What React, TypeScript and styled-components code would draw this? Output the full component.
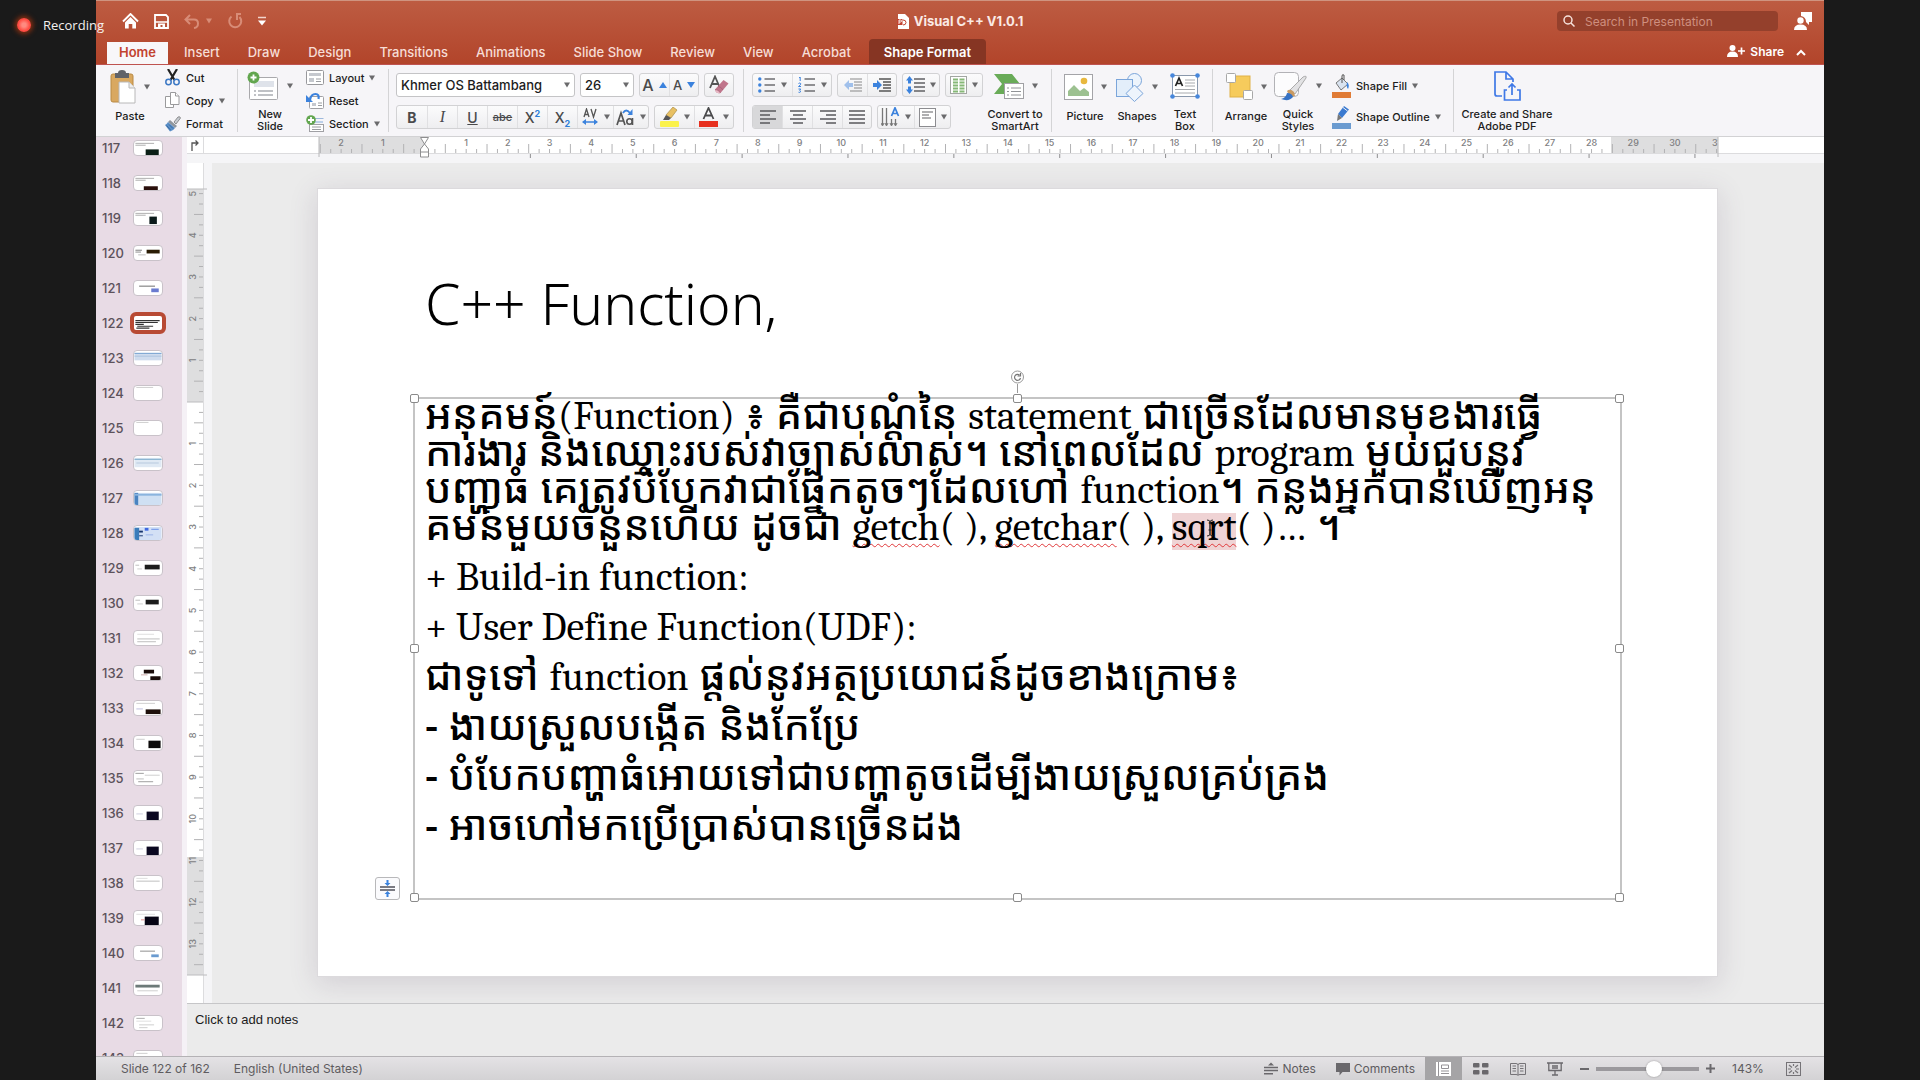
import React from "react";
import styled, { createGlobalStyle, css } from "styled-components";

const UI = `Inter, "Liberation Sans", sans-serif`;

const Global = createGlobalStyle`
  *, *::before, *::after { box-sizing: border-box; }
  body { margin: 0; background: #1a1a1a; font-family: ${UI}; }
  button, input, select, textarea { font: inherit; color: inherit; }
  button { border: 0; background: none; padding: 0; }
  svg { display: block; flex: none; }
`;

/* ---------- shell ---------- */
const Screen = styled.div`
  position: relative;
  display: flex;
  height: 100vh;
  padding: 0 96px;
  background: #1a1a1a;
`;
const AppWindow = styled.div`
  flex: 1;
  min-width: 0;
  display: flex;
  flex-direction: column;
  background: #f6f6f8;
`;
const RecordingBadge = styled.div`
  position: absolute;
  left: 15px;
  top: 16px;
  display: flex;
  align-items: center;
  gap: 10px;
  color: #f4f0ee;
  font: 13px/18px "Open Sans", "Noto Sans", sans-serif;
`;
const RecordDot = styled.span`
  width: 14px;
  height: 14px;
  margin: 2px;
  border-radius: 50%;
  background: radial-gradient(#ff8a80 0 20%, #ff4a40 60%);
  box-shadow: 0 0 5px 2px #8a3010;
`;

/* ---------- header ---------- */
const Header = styled.header`
  border-top: 1px solid #cf9480;
  background: linear-gradient(#bd5c42, #b2442a);
  color: #fbeae5;
`;
const TitleBar = styled.div`
  display: grid;
  grid-template-columns: 1fr auto 1fr;
  align-items: center;
  height: 38px;
  padding: 2px 12px 0;
`;
const QuickAccess = styled.div`
  display: flex;
  align-items: center;
  gap: 15px;
  margin-left: 14px;
`;
const IconButton = styled.button<{ $faded?: boolean }>`
  display: flex;
  align-items: center;
  gap: 6px;
  color: ${(p) => (p.$faded ? "#d88c77" : "#fff")};
`;
const DocTitle = styled.h1`
  display: flex;
  align-items: center;
  gap: 5px;
  margin: 0;
  font-size: 13px;
  font-weight: 700;
`;
const TitleTools = styled.div`
  display: flex;
  align-items: center;
  justify-content: flex-end;
  gap: 16px;
`;
const SearchBox = styled.label`
  display: flex;
  align-items: center;
  gap: 10px;
  width: 221px;
  height: 20px;
  padding: 0 6px;
  border-radius: 4px;
  background: #94402c;
  input {
    flex: 1;
    min-width: 0;
    border: 0;
    padding: 0;
    outline: 0;
    background: none;
    font-size: 12px;
  }
  input::placeholder { color: #cf8f7f; opacity: 1; }
`;
const TabRow = styled.nav`
  display: flex;
  align-items: flex-end;
  gap: 4px;
  height: 26px;
  padding: 0 14px 0 11px;
  border-bottom: 1px solid #bf5350;
`;
const Tab = styled.button<{ $kind?: "active" | "context" }>`
  height: 22px;
  padding: 0 12px 2px;
  font-size: 13px;
  font-weight: 500;
  line-height: 20px;
  white-space: nowrap;
  color: #f7ddd6;
  ${(p) =>
    p.$kind === "active" &&
    css`
      background: #f8f7f9;
      color: #c2432f;
      font-weight: 600;
    `}
  ${(p) =>
    p.$kind === "context" &&
    css`
      height: 25px;
      margin-left: 2px;
      padding: 0 15px;
      border-radius: 4px 4px 0 0;
      background: #863523;
      color: #fff;
      font-weight: 600;
    `}
`;
const ShareButton = styled.button`
  display: flex;
  align-items: center;
  gap: 5px;
  height: 22px;
  margin-left: auto;
  padding-bottom: 4px;
  font-size: 12px;
  font-weight: 600;
  color: #fff;
`;
const CollapseButton = styled.button`
  display: flex;
  align-items: center;
  height: 22px;
  margin-left: 8px;
  padding: 0 4px 2px 0;
  color: #fff;
`;

/* ---------- ribbon ---------- */
const Ribbon = styled.div`
  display: flex;
  align-items: center;
  height: 72px;
  border-bottom: 1px solid #d2d2d4;
  background: #f6f5f8;
  color: #1c1c1c;
  font-size: 11px;
  font-weight: 500;
`;
const Group = styled.div<{ $w?: number; $left?: number }>`
  display: flex;
  flex: none;
  width: ${(p) => (p.$w ? `${p.$w}px` : "auto")};
  height: 63px;
  align-items: stretch;
  padding-left: ${(p) => p.$left ?? 8}px;
  & + & { border-left: 1px solid #d4d4d6; }
`;
const BigButton = styled.button<{ $w: number }>`
  display: flex;
  flex-direction: column;
  align-items: center;
  justify-content: flex-start;
  width: ${(p) => p.$w}px;
  line-height: 12px;
  white-space: pre;
`;
const BigIcon = styled.span`
  display: flex;
  align-items: center;
  gap: 8px;
  height: 34px;
  margin: 1px 0 6px;
`;
const Stack = styled.div<{ $tall?: boolean }>`
  display: flex;
  flex-direction: column;
  justify-content: center;
  gap: ${(p) => (p.$tall ? 8 : 0)}px;
  margin-left: 9px;
`;
const SmallButton = styled.button<{ $icon?: number }>`
  display: grid;
  grid-template-columns: ${(p) => p.$icon ?? 18}px auto auto;
  justify-content: start;
  align-items: center;
  column-gap: 5px;
  flex: none;
  height: 23px;
  white-space: nowrap;
`;
const Rows = styled.div`
  display: flex;
  flex-direction: column;
  gap: 8px;
  padding-top: 4px;
`;
const Row = styled.div`
  display: flex;
  gap: 5px;
`;
const Cluster = styled.div`
  display: flex;
  height: 24px;
  border: 1px solid #d2d2d4;
  border-radius: 3px;
  background: linear-gradient(#fbfbfc, #eeeef0);
  overflow: hidden;
`;
const Cell = styled.button<{ $w?: number; $on?: boolean }>`
  display: flex;
  align-items: center;
  justify-content: center;
  gap: 5px;
  width: ${(p) => p.$w ?? 30}px;
  color: #4a4a4c;
  font-size: 14px;
  background: ${(p) => (p.$on ? "#d8d8da" : "none")};
  & + & { border-left: 1px solid #e0e0e2; }
`;
const Combo = styled.label<{ $w: number }>`
  position: relative;
  display: flex;
  align-items: center;
  width: ${(p) => p.$w}px;
  height: 24px;
  border: 1px solid #c4c4c6;
  border-radius: 3px;
  background: #fff;
  select {
    flex: 1;
    height: 100%;
    padding: 0 4px;
    border: 0;
    outline: 0;
    background: none;
    appearance: none;
    font-size: 13px;
  }
  svg {
    position: absolute;
    right: 4px;
    pointer-events: none;
  }
`;
const Glyph = styled.span<{ $bold?: boolean; $italic?: boolean; $line?: string; $size?: number }>`
  font-size: ${(p) => p.$size ?? 14}px;
  font-weight: ${(p) => (p.$bold ? 700 : 500)};
  font-style: ${(p) => (p.$italic ? "italic" : "normal")};
  font-family: ${(p) => (p.$italic ? `"Liberation Serif", serif` : "inherit")};
  text-decoration: ${(p) => p.$line ?? "none"};
  sup, sub { color: #2f7fd8; font-size: 9px; line-height: 0; font-weight: 700; }
`;

/* ---------- workspace ---------- */
const Workspace = styled.main`
  flex: 1;
  min-height: 0;
  display: flex;
`;
const Sidebar = styled.ol`
  width: 86px;
  margin: 0;
  padding: 0;
  overflow: hidden;
  list-style: none;
  background: #e8dbe5;
`;
const ThumbItem = styled.li`
  display: flex;
  align-items: center;
  height: 35px;
  padding-left: 6px;
  color: #5c525b;
  font-size: 13px;
  font-weight: 500;
  &:first-child { margin-top: -7px; }
`;
const ThumbNumber = styled.span`
  width: 28px;
`;
const ThumbFrame = styled.button<{ $on?: boolean }>`
  display: flex;
  border-radius: 4px;
  overflow: hidden;
  background: #fff;
  border: 1px solid #c9c2c9;
  margin: 0 3px;
  ${(p) =>
    p.$on &&
    css`
      margin: 0;
      border: 4px solid #b84a34;
      border-radius: 6px;
    `}
`;
const Editor = styled.section`
  flex: 1;
  min-width: 0;
  display: flex;
  flex-direction: column;
  border-left: 5px solid #f5f1f6;
`;
const RulerRow = styled.div`
  display: flex;
  height: 26px;
  background: #f5f5f7;
`;
const RulerCorner = styled.button`
  display: flex;
  justify-content: center;
  align-items: center;
  width: 17px;
  height: 17px;
  border: solid #dcdcde;
  border-width: 0 1px 1px 0;
  background: #fff;
  color: #555;
`;
const HRuler = styled.div`
  flex: 1;
  min-width: 0;
  overflow: hidden;
  svg { width: 100%; height: 26px; }
`;
const Stage = styled.div`
  flex: 1;
  min-height: 0;
  display: flex;
`;
const VRuler = styled.div`
  width: 25px;
  overflow: hidden;
  background: #f5f5f7;
  svg { width: 25px; height: 100%; }
`;
const Canvas = styled.div`
  flex: 1;
  min-width: 0;
  display: flex;
  padding: 26px 107px 27px 106px;
  background: #ebebeb;
`;
const Slide = styled.article`
  flex: 1;
  min-width: 0;
  display: flex;
  flex-direction: column;
  padding: 0 95px 76px;
  background: #fff;
  color: #000;
  box-shadow: 0 0 0 1px #dcdadd, 0 6px 26px 2px rgba(90, 70, 100, 0.16);
`;
const SlideTitle = styled.h2`
  height: 208px;
  margin: 0;
  padding: 76px 0 0 12px;
  font: 300 57px/76px "Noto Sans", "Open Sans", sans-serif;
`;
const TextFrame = styled.div`
  position: relative;
  flex: 1;
  border: 2px solid #c4c4c4;
  padding: 0 10px;
`;
const Body = styled.div`
  margin-top: -4px;
  font: 500 41px/37px "Noto Sans Khmer", "Noto Sans", sans-serif;
  white-space: nowrap;
`;
const Para = styled.p`
  margin: 0 0 13px;
`;
const Line = styled.span`
  display: block;
`;
const Latin = styled.span`
  font: 400 40px/0 Cambria, Caladea, "Liberation Serif", serif;
`;
const Misspelt = styled.span<{ $hit?: boolean }>`
  position: relative;
  text-decoration: underline wavy #e0383a 1px;
  text-underline-offset: 3px;
  text-decoration-skip-ink: none;
  ${(p) =>
    p.$hit &&
    css`
      background: linear-gradient(#efd3d4, #efd3d4) center bottom / 100% 37px no-repeat;
    `}
`;
const Pointer = styled.svg`
  position: absolute;
  left: 50%;
  top: 50%;
  margin: -8px 0 0 2px;
`;
const Handle = styled.i<{ $x: number; $y: number }>`
  position: absolute;
  left: ${(p) => p.$x}%;
  top: ${(p) => p.$y}%;
  width: 9px;
  height: 9px;
  margin: -5px;
  border: 1px solid #8a8a8a;
  border-radius: 2px;
  background: #fff;
`;
const RotateHandle = styled.span`
  position: absolute;
  left: 50%;
  top: -30px;
  margin-left: -8px;
`;
const AutofitButton = styled.button`
  position: absolute;
  left: -40px;
  bottom: -2px;
  display: flex;
  align-items: center;
  justify-content: center;
  width: 25px;
  height: 23px;
  border: 1px solid #b8b8ba;
  border-radius: 3px;
  background: #fbfbfd;
`;
const NotesPane = styled.label`
  display: block;
  height: 53px;
  border-top: 1px solid #c6c6c8;
  background: #ebebeb;
  textarea {
    display: block;
    width: 100%;
    height: 100%;
    padding: 8px;
    border: 0;
    outline: 0;
    resize: none;
    background: none;
    font: 13px/16px "Liberation Sans", Arial, sans-serif;
  }
  textarea::placeholder { color: #1c1c1c; opacity: 1; }
`;

/* ---------- status bar ---------- */
const StatusBar = styled.footer`
  display: flex;
  align-items: center;
  height: 24px;
  padding: 0 23px 0 25px;
  border-top: 1px solid #b4b2b5;
  background: linear-gradient(#e4e2e5, #d3d2d4);
  color: #5e5c60;
  font-size: 12px;
`;
const StatusText = styled.span`
  margin-right: 24px;
`;
const StatusButton = styled.button`
  display: flex;
  align-items: center;
  gap: 4px;
  & + & { margin: 0 10px 0 20px; }
`;
const StatusTools = styled.div`
  display: flex;
  align-items: center;
  align-self: stretch;
  margin-left: auto;
`;
const ViewButton = styled.button<{ $on?: boolean }>`
  display: flex;
  align-items: center;
  justify-content: center;
  align-self: stretch;
  width: 37px;
  background: ${(p) => (p.$on ? "#a5a4a6" : "none")};
`;
const ZoomSlider = styled.input`
  width: 103px;
  height: 16px;
  margin: 0 7px;
  appearance: none;
  background: linear-gradient(#9b999d, #9b999d) center / 100% 4px no-repeat;
  &::-webkit-slider-thumb {
    appearance: none;
    width: 16px;
    height: 16px;
    border-radius: 50%;
    background: #fff;
    box-shadow: 0 0 2px rgba(0, 0, 0, 0.35);
  }
`;
const ZoomValue = styled.output`
  width: 34px;
  margin: 0 20px 0 17px;
`;

/* ---------- icons ---------- */
const Caret = ({ light }: { light?: boolean }) => (
  <svg width="6" height="6" viewBox="0 0 6 6">
    <path d="M0 .5h6L3 5.5z" fill={light ? "currentColor" : "#6a6a6c"} />
  </svg>
);
const PasteIcon = () => (
  <svg width="26" height="34" viewBox="0 0 26 34">
    <rect x="1" y="4" width="22" height="28" rx="2" fill="#d9a860" stroke="#b98a45" />
    <path d="M5 3h3q0-3 4-3t4 3h3v5H5z" fill="#606268" />
    <path d="M9 12h10l6 6v15H9z" fill="#fff" stroke="#b8b8b8" />
    <path d="M19 12v6h6" fill="#eee" stroke="#b8b8b8" />
  </svg>
);
const CutIcon = () => (
  <svg width="15" height="17" viewBox="0 0 15 17" fill="none">
    <path d="M3 0l6.500 11M12 0L5.500 11" stroke="#222" strokeWidth="2.200" />
    <circle cx="3.500" cy="13" r="2.700" stroke="#3c78c4" strokeWidth="1.500" />
    <circle cx="11.500" cy="13" r="2.700" stroke="#3c78c4" strokeWidth="1.500" />
  </svg>
);
const CopyIcon = () => (
  <svg width="15" height="17" viewBox="0 0 15 17" fill="#fff" stroke="#9a9a9c">
    <path d="M.5 4.500h5l3 3v8h-8z" />
    <path d="M5.500.5h5l3.500 3.500v8.500H5.500z" />
    <path d="M10.500.5v3.500H14" />
  </svg>
);
const FormatIcon = () => (
  <svg width="16" height="16" viewBox="0 0 16 16">
    <path d="M9 6l4-5q2-1 2.500 1L11 8z" fill="#c8ccd2" stroke="#777" strokeWidth=".8" />
    <path d="M5 4l7 6-2 2-7-6z" fill="#8f969e" />
    <path d="M3 6l7 6q-2 3-5 3.500L0 9q2-1 3-3z" fill="#5b8fc7" />
    <path d="M1.500 9.500l4 4.500M4 8.500l4 4" stroke="#2f5f98" strokeWidth=".8" />
  </svg>
);
const PlusBadge = ({ x = 6, y = 6, r = 5.5 }) => (
  <g>
    <circle cx={x} cy={y} r={r} fill="#62a64f" />
    <path d={`M${x - 3} ${y}h6M${x} ${y - 3}v6`} stroke="#fff" strokeWidth="1.800" />
  </g>
);
const NewSlideIcon = () => (
  <svg width="32" height="30" viewBox="0 0 32 30">
    <rect x="2.500" y="6.500" width="28" height="22" rx="1" fill="#fff" stroke="#a9a9ac" />
    <rect x="7" y="10" width="20" height="6" fill="#dfe3ea" />
    <path d="M7 20h2M11 20h15M7 24h2M11 24h15" stroke="#aaadb2" strokeWidth="1.500" />
    <PlusBadge x={6.500} y={6.500} r={6} />
  </svg>
);
const LayoutIcon = () => (
  <svg width="18" height="15" viewBox="0 0 18 15">
    <rect x=".5" y=".5" width="17" height="14" rx="1" fill="#fff" stroke="#98989c" />
    <rect x="3" y="3" width="12" height="3" fill="#c5c8ce" />
    <rect x="3" y="8" width="5" height="4" fill="#c5c8ce" />
    <path d="M10 9h5M10 11.500h5" stroke="#9a9ca0" />
  </svg>
);
const ResetIcon = () => (
  <svg width="18" height="17" viewBox="0 0 18 17">
    <rect x="3.500" y="4.500" width="14" height="12" rx="1" fill="#fff" stroke="#a0a0a4" />
    <rect x="6" y="11" width="4" height="3" fill="#c5c8ce" />
    <path d="M12 11h4M12 13.500h4" stroke="#9a9ca0" />
    <path d="M4 8Q5 2 9.500 2q4 0 3 5" fill="none" stroke="#3b82dd" strokeWidth="2.200" />
    <path d="M0 3v7h7z" fill="#3b82dd" />
  </svg>
);
const SectionIcon = () => (
  <svg width="18" height="17" viewBox="0 0 18 17">
    <path d="M8 3.500h9.500" stroke="#9db8dc" />
    <rect x="3.500" y="9.500" width="14" height="7" fill="#fff" stroke="#a0a0a4" />
    <rect x="8" y="6" width="9" height="2" fill="#bcd0ea" />
    <path d="M6 12h9M6 14.500h9" stroke="#9a9ca0" />
    <PlusBadge x={5} y={5} r={4.800} />
  </svg>
);
const EraserIcon = () => (
  <svg width="20" height="20" viewBox="0 0 20 20">
    <path d="M1 13L6 1.500 11 13M3 9h6" fill="none" stroke="#555" strokeWidth="1.800" />
    <path d="M6 14.500L14.500 5l5 3.500-8 9.500q-4 1.500-5.500-3.500z" fill="#c0758b" />
    <path d="M6 14.500q3-.5 5.500 3.500-4 1.500-5.500-3.500z" fill="#e8b9c5" />
    <path d="M6 14.500q3-.5 5.500 3.500M9 11.500q3 0 5 3.500" fill="none" stroke="#a05a70" strokeWidth=".7" />
  </svg>
);
const SizeIcon = ({ up }: { up?: boolean }) => (
  <svg width="8" height="6" viewBox="0 0 8 6">
    <path d={up ? "M0 6h8L4 0z" : "M0 0h8L4 6z"} fill="#3b82dd" />
  </svg>
);
const SpacingIcon = () => (
  <svg width="17" height="18" viewBox="0 0 17 18">
    <path d="M2 9L4.500 1 7 9M3 6.500h3M9 1l2.500 8L14 1" fill="none" stroke="#555" strokeWidth="1.300" />
    <path d="M1 14h14" stroke="#3b82dd" strokeWidth="1.500" />
    <path d="M4 11v6L0 14zM12 11v6l4-3z" fill="#3b82dd" />
  </svg>
);
const CaseIcon = () => (
  <svg width="19" height="18" viewBox="0 0 19 18" fill="none">
    <path d="M1 17L5 5l4 12M2.500 13h5" stroke="#555" strokeWidth="1.700" />
    <circle cx="13.500" cy="13.500" r="2.700" stroke="#555" strokeWidth="1.600" />
    <path d="M16.500 10v7" stroke="#555" strokeWidth="1.600" />
    <path d="M7 5q3-5 7 0" stroke="#3b82dd" strokeWidth="1.800" />
    <path d="M16.500 1v6h-5z" fill="#3b82dd" />
  </svg>
);
const HighlightIcon = () => (
  <svg width="19" height="20" viewBox="0 0 19 20">
    <rect y="14" width="19" height="6" rx="1" fill="#fbf24b" />
    <path d="M6 8l7-8 4 3-6 8z" fill="#e8c063" stroke="#a98c48" strokeWidth=".7" />
    <path d="M6 8l5 3-2 2H3z" fill="#555" />
  </svg>
);
const FontColorIcon = () => (
  <svg width="19" height="20" viewBox="0 0 19 20">
    <path d="M4.500 12L9.500 1l5 11M6 8.500h7" fill="none" stroke="#4a4a4c" strokeWidth="1.800" />
    <rect y="14" width="19" height="6" fill="#e7301f" />
  </svg>
);
const digits = ["M1 1l1.200-1v4", "M.5 6.500q1.500-1 2.200 0T.5 9.500h2.500", "M.5 12h2.200l-1 1.500q1.500.5.5 1.700-.7.500-1.700 0"];
const BulletsIcon = ({ numbered }: { numbered?: boolean }) => (
  <svg width="18" height="16" viewBox="0 0 18 16">
    {[2, 8, 14].map((y, i) =>
      numbered ? (
        <path key={y} d={digits[i]} stroke="#3b82dd" fill="none" />
      ) : (
        <circle key={y} cx="1.800" cy={y} r="1.700" fill="#3b82dd" />
      )
    )}
    <path d="M6.500 2H17M6.500 8H17M6.500 14H17" stroke="#6e6e72" strokeWidth="1.600" />
  </svg>
);
const IndentIcon = ({ right }: { right?: boolean }) => (
  <svg width="18" height="14" viewBox="0 0 18 14" opacity={right ? 1 : 0.45}>
    <path d="M6 1h12M10 4h8M10 7h8M10 10h8M6 13h12" stroke="#555" strokeWidth="1.400" />
    <path d={right ? "M9 7L4 2v3H0v4h4v3z" : "M0 7l5-5v3h4v4H5v3z"} fill="#3b82dd" />
  </svg>
);
const LineSpacingIcon = () => (
  <svg width="19" height="18" viewBox="0 0 19 18">
    <path d="M8 3h11M8 7h11M8 11h11M8 15h11" stroke="#606064" strokeWidth="1.500" />
    <path d="M3.500 0L7 4.500H5v3H2v-3H0zM3.500 18L7 13.500H5v-3H2v3H0z" fill="#3b82dd" />
  </svg>
);
const ColumnsIcon = () => (
  <svg width="17" height="18" viewBox="0 0 17 18">
    <rect x=".5" y=".5" width="16" height="17" fill="#fff" stroke="#a2a6a2" />
    <path d="M3 3.500h5M3 6.500h5M3 9.500h5M3 12.500h5M3 15.500h5M9.500 3.500h5M9.500 6.500h5M9.500 9.500h5M9.500 12.500h5M9.500 15.500h5" stroke="#86b877" strokeWidth="1.800" />
  </svg>
);
const alignPaths = {
  left: "M0 1h16M0 5h10M0 9h16M0 13h10",
  center: "M0 1h16M3 5h10M0 9h16M3 13h10",
  right: "M0 1h16M6 5h10M0 9h16M6 13h10",
  justify: "M0 1h16M0 5h16M0 9h16M0 13h16",
};
const AlignIcon = ({ kind }: { kind: keyof typeof alignPaths }) => (
  <svg width="16" height="14" viewBox="0 0 16 14" stroke="#58585c" strokeWidth="1.500">
    <path d={alignPaths[kind]} />
  </svg>
);
const DirectionIcon = () => (
  <svg width="19" height="20" viewBox="0 0 19 20" fill="none">
    <path d="M1.500 1v17M5.500 1v17M10.500 12v6M14.500 12v6" stroke="#777" strokeWidth="1.300" />
    <path d="M0 16l1.500 3L3 16M4 16l1.500 3L7 16M9 16l1.500 3 1.500-3M13 16l1.500 3 1.500-3" stroke="#777" />
    <path d="M10.500 9L14 .8 17.500 9M11.800 6.500h4.400" stroke="#3b82dd" strokeWidth="1.700" />
  </svg>
);
const TextAlignIcon = () => (
  <svg width="17" height="19" viewBox="0 0 17 19">
    <rect x=".5" y=".5" width="16" height="18" fill="#fff" stroke="#8c8c90" />
    <path d="M3 4h11M3 7h7M3 10h9" stroke="#606064" strokeWidth="1.200" />
  </svg>
);
const SmartArtIcon = () => (
  <svg width="31" height="28" viewBox="0 0 31 28">
    <path d="M1 2h18l8 10-8 10H1l8-10z" fill="#69ab58" />
    <rect x="11.500" y="11.500" width="19" height="15" fill="#fff" stroke="#a0a0a4" />
    <path d="M14 16h2M18 16h10M14 19.500h2M18 19.500h10M14 23h2M18 23h10" stroke="#909296" />
  </svg>
);
const PictureIcon = () => (
  <svg width="29" height="26" viewBox="0 0 29 26">
    <rect x=".5" y=".5" width="28" height="25" fill="#fff" stroke="#a4a4a8" />
    <path d="M4 22v-5l6-6 6 6 4-3 5 4v4z" fill="#9cc190" />
    <circle cx="20" cy="7" r="3.300" fill="#e8b83e" />
  </svg>
);
const ShapesIcon = () => (
  <svg width="28" height="29" viewBox="0 0 28 29" fill="#edf4fc" stroke="#7ba5da">
    <circle cx="18.500" cy="7.500" r="7" />
    <rect x=".5" y="6.500" width="16" height="17" fill="#e3eefa" />
    <path d="M18.500 12l8.500 8.500-8.500 8-8.500-8z" />
  </svg>
);
const TextBoxIcon = () => (
  <svg width="30" height="26" viewBox="0 0 30 26">
    <rect x="2.500" y="2.500" width="25" height="21" fill="#fff" stroke="#8a98ac" />
    <path d="M5.500 13L9 5l3.500 8M6.800 10.500h4.400" fill="none" stroke="#222" strokeWidth="1.700" />
    <path d="M15 7h10M15 10h10M15 13h10M5 16.500h20M5 20h20" stroke="#a8aaae" />
    {[[2.500, 2.500], [27.500, 2.500], [2.500, 23.500], [27.500, 23.500]].map(([x, y]) => (
      <circle key={`${x}${y}`} cx={x} cy={y} r="2.300" fill="#4787dc" />
    ))}
  </svg>
);
const ArrangeIcon = () => (
  <svg width="27" height="28" viewBox="0 0 27 28">
    <rect x="4" y="3" width="20" height="21" fill="#f6cb5c" stroke="#dfb146" />
    <rect x=".5" y=".5" width="9" height="9" rx="1" fill="#fff" stroke="#a8a8a8" />
    <rect x="17.500" y="17.500" width="9" height="9" rx="1" fill="#fff" stroke="#a8a8a8" />
  </svg>
);
const QuickStylesIcon = () => (
  <svg width="34" height="30" viewBox="0 0 34 30">
    <rect x=".5" y="1.500" width="24" height="24" rx="4" fill="#fcfcfd" stroke="#b2b2b6" />
    <path d="M16 19L29 6q4-2 3 1L21 23z" fill="#e2e2e4" stroke="#999" strokeWidth=".8" />
    <path d="M13 20q3-3 7 1l1 4-5 1z" fill="#c99a62" />
    <path d="M7 28q5-1 6-6 5 0 6 4-4 5-12 2z" fill="#3672c4" />
  </svg>
);
const FillIcon = () => (
  <svg width="19" height="24" viewBox="0 0 19 24">
    <rect y="18" width="19" height="6" fill="#e07b36" />
    <path d="M4 9l6-5 6 6-7 6z" fill="#d9e3f0" stroke="#777" />
    <path d="M10 9V2q0-2 2-1v5" fill="none" stroke="#555" />
    <path d="M15 8q3 3 1 7-2-2-1-7z" fill="#3b82dd" />
  </svg>
);
const OutlineIcon = () => (
  <svg width="19" height="24" viewBox="0 0 19 24">
    <rect y="18" width="19" height="6" fill="#6b9bd0" />
    <path d="M6 9l6-8 5 3.500-7 8.500z" fill="#3b7ad0" />
    <path d="M11 2.500l4.500 3.500" stroke="#f6f5f8" />
    <path d="M6 9l4 4-5 3z" fill="#777" />
  </svg>
);
const PdfIcon = () => (
  <svg width="27" height="30" viewBox="0 0 27 30" fill="none" stroke="#3f78e6" strokeWidth="1.700">
    <path d="M8 25H3q-2 0-2-2V1h11l7 7v3M12 1v7h7" />
    <path d="M13 19h-2.500v10H26V19h-3M18 24V13M14.500 16.500L18 13l3.500 3.500" />
  </svg>
);
const HomeIcon = () => (
  <svg width="17" height="16" viewBox="0 0 17 16">
    <path d="M1 8.500L8.500 1 16 8.500" fill="none" stroke="#fff" strokeWidth="1.900" />
    <path d="M3 9.500L8.500 4 14 9.500V15.500h-3.700v-4.500H6.700v4.500H3z" fill="#fff" />
  </svg>
);
const SaveIcon = () => (
  <svg width="15" height="15" viewBox="0 0 15 15">
    <path d="M1 1h11l2 2v11H1z" fill="none" stroke="#fff" strokeWidth="1.800" />
    <path d="M1 8h13" stroke="#fff" strokeWidth="1.500" />
    <path d="M4 9.500h7V14H8.500v-3h-2v3H4z" fill="#fff" />
  </svg>
);
const UndoIcon = () => (
  <svg width="16" height="15" viewBox="0 0 16 15" fill="none" stroke="currentColor" strokeWidth="2">
    <path d="M6 1L1.500 5.500 6 10M2 5.500h8q4 0 4 4t-4 4.500" />
  </svg>
);
const RedoIcon = () => (
  <svg width="16" height="16" viewBox="0 0 16 16" fill="none" stroke="currentColor" strokeWidth="2">
    <path d="M4.500 3.500A6 6 0 1 0 12.500 4M9 1h5M10 1v6" />
  </svg>
);
const CustomizeIcon = () => (
  <svg width="8" height="10" viewBox="0 0 8 10">
    <path d="M0 1.500h8" stroke="#f3d5cc" strokeWidth="1.500" />
    <path d="M0 4.500h8L4 9.500z" fill="#fff" />
  </svg>
);
const DocIcon = () => (
  <svg width="12" height="15" viewBox="0 0 12 15">
    <path d="M1 0h7l4 4v11H1z" fill="#fff" />
    <path d="M0 5h5.500v6H0z" fill="#c2432f" />
    <path d="M2 10V6h1.500q1 0 1 1t-1 1H2" stroke="#fff" fill="none" strokeWidth=".9" />
    <path d="M6 6q3 0 3 2.500T6 11" stroke="#c2432f" fill="none" />
  </svg>
);
const SearchIcon = () => (
  <svg width="12" height="12" viewBox="0 0 12 12" fill="none" stroke="#f6e2dc" strokeWidth="1.500">
    <circle cx="5" cy="5" r="4" />
    <path d="M8 8l3.500 3.500" />
  </svg>
);
const PresenceIcon = () => (
  <svg width="18" height="18" viewBox="0 0 18 18" fill="#fff">
    <path d="M7 0h11v10h-3v3l-3-3q0-5-5-6z" />
    <circle cx="6.500" cy="8.500" r="3.200" />
    <path d="M0 18q0-5.500 6.500-5.500T13 18z" />
  </svg>
);
const ShareIcon = () => (
  <svg width="18" height="12" viewBox="0 0 18 12" fill="#fff">
    <circle cx="5.500" cy="3" r="3" />
    <path d="M0 12q0-5.500 5.500-5.500T11 12z" />
    <path d="M14.500 2.500v7M11 6h7" stroke="#fff" strokeWidth="1.700" />
  </svg>
);
const NotesIcon = () => (
  <svg width="14" height="13" viewBox="0 0 14 13" stroke="#6a686c" strokeWidth="1.500">
    <path d="M0 5.500h14M0 8.500h14M0 11.700h9" />
    <path d="M4 3.500L7 .5l3 3z" fill="#6a686c" stroke="none" />
  </svg>
);
const CommentIcon = () => (
  <svg width="14" height="14" viewBox="0 0 14 14">
    <path d="M0 1h14v9H6.500L3.500 13.500V10H0z" fill="#6a686c" />
  </svg>
);
const NormalViewIcon = () => (
  <svg width="15" height="14" viewBox="0 0 15 14">
    <rect width="15" height="14" fill="#fff" />
    <path d="M2.500 0v14M5.500 3h7v3.500h-7zM5 9h8M5 11.500h8" stroke="#949296" fill="none" />
  </svg>
);
const SorterIcon = () => (
  <svg width="16" height="12" viewBox="0 0 16 12" fill="#6a686c">
    <rect width="6.500" height="4.500" rx="1" />
    <rect x="9" width="6.500" height="4.500" rx="1" />
    <rect y="7" width="6.500" height="4.500" rx="1" />
    <rect x="9" y="7" width="6.500" height="4.500" rx="1" />
  </svg>
);
const BookIcon = () => (
  <svg width="16" height="14" viewBox="0 0 16 14" fill="none" stroke="#757377">
    <path d="M.5 1.500H6q2 0 2 1.500 0-1.500 2-1.500h5.500v11H10q-2 0-2 1 0-1-2-1H.5zM8 3v10M2.500 4h3.500M2.500 6.500h3.500M2.500 9h3.500M10 4h3.500M10 6.500h3.500M10 9h3.500" />
  </svg>
);
const PresentIcon = () => (
  <svg width="16" height="14" viewBox="0 0 16 14" fill="none" stroke="#6a686c" strokeWidth="1.300">
    <path d="M0 1h16M1.800 1v7.500h12.400V1M5 4h6M5 6h6M8 8.500V13M5 13h6" />
  </svg>
);
const FitIcon = () => (
  <svg width="15" height="14" viewBox="0 0 15 14" fill="none" stroke="#757377">
    <rect x=".5" y=".5" width="14" height="13" />
    <path d="M3 3l3 2.500M12 3L9 5.500M3 11l3-2.500M12 11L9 8.500M7.500 2v2M7.500 10v2M2 7h3M10 7h3" strokeWidth="1.200" />
  </svg>
);
const AutofitIcon = () => (
  <svg width="15" height="17" viewBox="0 0 15 17">
    <path d="M0 7h15M0 10h15" stroke="#50505a" strokeWidth="1.300" />
    <path d="M7.500 6L4.500 3H6.500V0h2v3h2zM7.500 11l-3 3h2v3h2v-3h2z" fill="#3b82dd" />
  </svg>
);

/* ---------- rulers ---------- */
const CM = 41.68;
const ink = "#808082";

function HorizontalRuler() {
  const zero = 220.5;
  const ticks = [];
  for (let q = -10; q < 125; q++) {
    const x = zero + (q * CM) / 4;
    if (q === 0 || x > 1514) continue;
    ticks.push(<path key={q} d={`M${x} ${Math.abs(q % 4) === 2 ? 7 : 12}V16`} stroke="#b2b2b4" />);
  }
  return (
    <svg role="img" aria-label="Horizontal ruler">
      <rect width="100%" height="16" fill="#fff" />
      <rect x="115" width="105" height="16" fill="#dededf" />
      <rect x="1407" width="107" height="16" fill="#dededf" />
      <path d="M0 16.500H1700" stroke="#dcdcde" />
      {ticks}
      {Array.from({ length: 34 }, (_, i) => i - 2)
        .filter((n) => n !== 0)
        .map((n) => (
          <text key={n} x={zero + n * CM} y="9" fontSize="9" fontWeight="500" textAnchor="middle" fill={ink}>
            {Math.abs(n)}
          </text>
        ))}
      {Array.from({ length: 12 }, (_, i) => (
        <path key={i} d={`M${zero + (i + 1) * 105.87} 17v4`} stroke="#8e8e90" />
      ))}
      <path d="M1514 0H1700V16H1514z" fill="#fff" />
      <path d="M115 0v20M1514 0v20" stroke="#b8b8ba" />
      <path d="M216.500.5h8l-4 6.500 4 5v8h-8v-8l4-5zM216.500 15h8" fill="#fff" stroke="#8e8e90" />
    </svg>
  );
}

function VerticalRuler() {
  const zero = 239;
  const ticks = [];
  for (let q = -20; q < 55; q++) {
    const y = zero + (q * CM) / 4;
    if (q === 0 || y < 27 || y > 811) continue;
    ticks.push(<path key={q} d={`M${Math.abs(q % 4) === 2 ? 7 : 12} ${y}H16`} stroke="#b2b2b4" />);
  }
  return (
    <svg role="img" aria-label="Vertical ruler">
      <rect width="16" height="100%" fill="#fff" />
      <rect y="26" width="16" height="213" fill="#dededf" />
      <rect y="694" width="16" height="118" fill="#dededf" />
      <path d="M16.500 0V900" stroke="#dcdcde" />
      <path d="M0 26h20M0 812h20M0 239h16" stroke="#bcbcbe" />
      {ticks}
      {Array.from({ length: 19 }, (_, i) => i - 5)
        .filter((n) => n !== 0)
        .map((n) => (
          <text key={n} transform={`translate(9 ${zero + n * CM}) rotate(-90)`} fontSize="9" fontWeight="500" textAnchor="middle" fill={ink}>
            {Math.abs(n)}
          </text>
        ))}
    </svg>
  );
}

/* ---------- slide thumbnails ---------- */
type Box = [number, number, number, number, string];
type Thumb = { n: number; boxes?: Box[]; lines?: number[]; dense?: boolean };
const thumbs: Thumb[] = [
  { n: 117, lines: [2, 4], boxes: [[12, 9, 14, 6, "#0b1f16"]] },
  { n: 118, lines: [2, 4], boxes: [[10, 11, 15, 4, "#2a0f0c"]] },
  { n: 119, lines: [2, 4], boxes: [[16, 6, 8, 8, "#0a1a1a"]] },
  { n: 120, boxes: [[1, 4, 7, 1, "#777"], [1, 6, 6, 1, "#888"], [13, 4, 14, 4, "#2a1c04"], [4, 9, 8, 1, "#bbb"]] },
  { n: 121, boxes: [[5, 5, 17, 1, "#666"], [18, 8, 8, 4, "#6a7bd0"]] },
  { n: 122, dense: true },
  { n: 123, boxes: [[0, 2, 29, 8, "#cfdcee"], [0, 2, 29, 1, "#6f9fce"], [0, 5, 29, 1, "#aac2de"]] },
  { n: 124, boxes: [[2, 1, 18, 1, "#ccc"]] },
  { n: 125, boxes: [[2, 1, 13, 1, "#ccc"]] },
  { n: 126, boxes: [[0, 2, 29, 10, "#dfe9f4"], [0, 3, 29, 1, "#6fa3c6"], [2, 7, 24, 1, "#b4c8dc"]] },
  { n: 127, boxes: [[0, 2, 29, 13, "#cfe0f3"], [0, 2, 4, 13, "#4a83c0"], [0, 3, 29, 2, "#8ab4de"]] },
  { n: 128, boxes: [[0, 1, 29, 14, "#d3e0f5"], [0, 2, 5, 13, "#3b7cba"], [5, 5, 4, 2, "#15336b"], [5, 10, 4, 1, "#15336b"], [11, 2, 4, 3, "#3f69e0"], [18, 3, 8, 1, "#5f8ae8"], [12, 9, 8, 1, "#9ab2e8"]] },
  { n: 129, boxes: [[11, 4, 16, 5, "#1c1c1c"], [1, 4, 4, 1, "#bbb"], [3, 8, 5, 1, "#ccc"]] },
  { n: 130, boxes: [[12, 4, 14, 5, "#1c1c1c"], [1, 4, 5, 1, "#bbb"], [3, 8, 6, 1, "#ccc"]] },
  { n: 131, boxes: [[3, 3, 18, 1, "#ddd"], [3, 8, 24, 1, "#bbb"], [3, 11, 20, 1, "#bbb"]] },
  { n: 132, boxes: [[10, 4, 11, 4, "#1a0c0a"], [17, 11, 11, 4, "#1a0c0a"], [7, 9, 7, 1, "#caa"]] },
  { n: 133, boxes: [[12, 9, 16, 5, "#1e0f0a"], [2, 8, 7, 1, "#bbd"], [2, 2, 20, 1, "#ccc"]] },
  { n: 134, boxes: [[15, 5, 13, 8, "#0c0a0a"], [2, 3, 9, 1, "#ccc"]] },
  { n: 135, boxes: [[1, 2, 9, 1, "#999"], [11, 4, 16, 1, "#ccc"], [2, 8, 8, 1, "#bbb"], [4, 11, 16, 1, "#999"]] },
  { n: 136, boxes: [[13, 6, 13, 9, "#0a0720"], [2, 8, 7, 1, "#ccd"]] },
  { n: 137, boxes: [[13, 6, 13, 9, "#0a0720"], [2, 8, 7, 1, "#ccd"]] },
  { n: 138, boxes: [[2, 2, 12, 1, "#ddd"], [2, 5, 25, 1, "#bbb"]] },
  { n: 139, boxes: [[11, 6, 15, 9, "#060414"], [7, 9, 4, 1, "#d88"], [2, 3, 20, 1, "#ddd"]] },
  { n: 140, boxes: [[6, 5, 16, 1, "#888"], [18, 9, 8, 3, "#6a9bd0"]] },
  { n: 141, boxes: [[1, 4, 26, 3, "#6c7a78"], [3, 10, 22, 1, "#ccc"]] },
  { n: 142, boxes: [[2, 2, 9, 1, "#aaa"], [2, 5, 16, 1, "#ddd"], [5, 9, 16, 1, "#ccc"], [5, 12, 9, 1, "#ccc"]] },
  { n: 143, boxes: [[2, 2, 12, 1, "#ccc"]] },
];

function ThumbArt({ t }: { t: Thumb }) {
  return (
    <svg width="28" height="14" viewBox="0 0 29 15">
      {t.dense && <path d="M1 5h26M1 7h24M1 9h9M3 11h17M2 13h14" stroke="#333" strokeWidth="1.200" />}
      {t.lines?.map((y) => (
        <rect key={y} x="1" y={y} width={y === 2 ? 20 : 11} height="1" fill="#aaa" />
      ))}
      {t.boxes?.map(([x, y, w, h, c], i) => (
        <rect key={i} x={x} y={y} width={w} height={h} fill={c} />
      ))}
    </svg>
  );
}

const handles = [
  [0, 0], [50, 0], [100, 0],
  [0, 50], [100, 50],
  [0, 100], [50, 100], [100, 100],
];

export default function App() {
  return (
    <Screen>
      <Global />
      <AppWindow>
        <Header>
          <TitleBar>
            <QuickAccess>
              <IconButton aria-label="Home"><HomeIcon /></IconButton>
              <IconButton aria-label="Save"><SaveIcon /></IconButton>
              <IconButton aria-label="Undo" $faded><UndoIcon /><Caret light /></IconButton>
              <IconButton aria-label="Redo" $faded><RedoIcon /></IconButton>
              <IconButton aria-label="Customize toolbar"><CustomizeIcon /></IconButton>
            </QuickAccess>
            <DocTitle><DocIcon />Visual C++ V1.0.1</DocTitle>
            <TitleTools>
              <SearchBox>
                <SearchIcon />
                <input aria-label="Search in Presentation" placeholder="Search in Presentation" />
              </SearchBox>
              <IconButton aria-label="Account"><PresenceIcon /></IconButton>
            </TitleTools>
          </TitleBar>
          <TabRow>
            <Tab $kind="active">Home</Tab>
            {["Insert", "Draw", "Design", "Transitions", "Animations", "Slide Show", "Review", "View", "Acrobat"].map((t) => (
              <Tab key={t}>{t}</Tab>
            ))}
            <Tab $kind="context">Shape Format</Tab>
            <ShareButton><ShareIcon />Share</ShareButton>
            <CollapseButton aria-label="Collapse ribbon">
              <svg width="10" height="7" viewBox="0 0 10 7" fill="none" stroke="currentColor" strokeWidth="2">
                <path d="M1 6l4-4 4 4" />
              </svg>
            </CollapseButton>
          </TabRow>
        </Header>

        <Ribbon>
          <Group $w={141}>
            <BigButton $w={52}><BigIcon><PasteIcon /><Caret /></BigIcon>Paste</BigButton>
            <Stack>
              <SmallButton $icon={16}><CutIcon />Cut</SmallButton>
              <SmallButton $icon={16}><CopyIcon />Copy<Caret /></SmallButton>
              <SmallButton $icon={16}><FormatIcon />Format</SmallButton>
            </Stack>
          </Group>
          <Group $w={151} $left={5}>
            <BigButton $w={54}><BigIcon><NewSlideIcon /><Caret /></BigIcon>{"New\nSlide"}</BigButton>
            <Stack>
              <SmallButton><LayoutIcon />Layout<Caret /></SmallButton>
              <SmallButton><ResetIcon />Reset</SmallButton>
              <SmallButton><SectionIcon />Section<Caret /></SmallButton>
            </Stack>
          </Group>
          <Group $w={355} $left={7}>
            <Rows>
              <Row>
                <Combo $w={179}>
                  <select aria-label="Font"><option>Khmer OS Battambang</option></select>
                  <Caret />
                </Combo>
                <Combo $w={54}>
                  <select aria-label="Font size"><option>26</option></select>
                  <Caret />
                </Combo>
                <Cluster>
                  <Cell $w={29} aria-label="Increase font size"><Glyph $size={16}>A</Glyph><SizeIcon up /></Cell>
                  <Cell $w={29} aria-label="Decrease font size"><Glyph $size={13}>A</Glyph><SizeIcon /></Cell>
                </Cluster>
                <Cluster><Cell $w={28} aria-label="Clear formatting"><EraserIcon /></Cell></Cluster>
              </Row>
              <Row>
                <Cluster>
                  <Cell><Glyph $bold>B</Glyph></Cell>
                  <Cell><Glyph $italic $size={16}>I</Glyph></Cell>
                  <Cell><Glyph $line="underline">U</Glyph></Cell>
                  <Cell><Glyph $line="line-through" $size={11}>abc</Glyph></Cell>
                  <Cell><Glyph>X<sup>2</sup></Glyph></Cell>
                  <Cell><Glyph>X<sub>2</sub></Glyph></Cell>
                  <Cell $w={36} aria-label="Character spacing"><SpacingIcon /><Caret /></Cell>
                  <Cell $w={35} aria-label="Change case"><CaseIcon /><Caret /></Cell>
                </Cluster>
                <Cluster>
                  <Cell $w={39} aria-label="Highlight"><HighlightIcon /><Caret /></Cell>
                  <Cell $w={39} aria-label="Font color"><FontColorIcon /><Caret /></Cell>
                </Cluster>
              </Row>
            </Rows>
          </Group>
          <Group $w={308}>
            <Rows>
              <Row>
                <Cluster>
                  <Cell $w={39} aria-label="Bullets"><BulletsIcon /><Caret /></Cell>
                  <Cell $w={39} aria-label="Numbering"><BulletsIcon numbered /><Caret /></Cell>
                </Cluster>
                <Cluster>
                  <Cell $w={29} aria-label="Decrease indent"><IndentIcon /></Cell>
                  <Cell $w={29} aria-label="Increase indent"><IndentIcon right /></Cell>
                </Cluster>
                <Cluster><Cell $w={36} aria-label="Line spacing"><LineSpacingIcon /><Caret /></Cell></Cluster>
                <Cluster><Cell $w={36} aria-label="Columns"><ColumnsIcon /><Caret /></Cell></Cluster>
              </Row>
              <Row>
                <Cluster>
                  <Cell $on $w={29} aria-label="Align left"><AlignIcon kind="left" /></Cell>
                  <Cell aria-label="Center"><AlignIcon kind="center" /></Cell>
                  <Cell aria-label="Align right"><AlignIcon kind="right" /></Cell>
                  <Cell $w={29} aria-label="Justify"><AlignIcon kind="justify" /></Cell>
                </Cluster>
                <Cluster>
                  <Cell $w={36} aria-label="Text direction"><DirectionIcon /><Caret /></Cell>
                  <Cell $w={36} aria-label="Align text"><TextAlignIcon /><Caret /></Cell>
                </Cluster>
              </Row>
            </Rows>
            <BigButton $w={64}><BigIcon><SmartArtIcon /><Caret /></BigIcon>{"Convert to\nSmartArt"}</BigButton>
          </Group>
          <Group $w={161}>
            <BigButton $w={50}><BigIcon><PictureIcon /><Caret /></BigIcon>Picture</BigButton>
            <BigButton $w={54}><BigIcon><ShapesIcon /><Caret /></BigIcon>Shapes</BigButton>
            <BigButton $w={42}><BigIcon><TextBoxIcon /></BigIcon>{"Text\nBox"}</BigButton>
          </Group>
          <Group $w={241} $left={6}>
            <BigButton $w={54}><BigIcon><ArrangeIcon /><Caret /></BigIcon>Arrange</BigButton>
            <BigButton $w={50}><BigIcon><QuickStylesIcon /><Caret /></BigIcon>{"Quick\nStyles"}</BigButton>
            <Stack $tall>
              <SmallButton $icon={19}><FillIcon />Shape Fill<Caret /></SmallButton>
              <SmallButton $icon={19}><OutlineIcon />Shape Outline<Caret /></SmallButton>
            </Stack>
          </Group>
          <Group $left={4}>
            <BigButton $w={98}><BigIcon><PdfIcon /></BigIcon>{"Create and Share\nAdobe PDF"}</BigButton>
          </Group>
        </Ribbon>

        <Workspace>
          <Sidebar>
            {thumbs.map((t) => (
              <ThumbItem key={t.n}>
                <ThumbNumber>{t.n}</ThumbNumber>
                <ThumbFrame $on={t.n === 122} aria-label={`Slide ${t.n}`}><ThumbArt t={t} /></ThumbFrame>
              </ThumbItem>
            ))}
          </Sidebar>
          <Editor>
            <RulerRow>
              <RulerCorner aria-label="Tab stop type">
                <svg width="8" height="11" viewBox="0 0 8 11" fill="none" stroke="currentColor" strokeWidth="1.300">
                  <path d="M1 11V3h6M4.500.5L7 3 4.500 5.500" />
                </svg>
              </RulerCorner>
              <HRuler><HorizontalRuler /></HRuler>
            </RulerRow>
            <Stage>
              <VRuler><VerticalRuler /></VRuler>
              <Canvas>
                <Slide>
                  <SlideTitle>C++ Function,</SlideTitle>
                  <TextFrame>
                    <Body>
                      <Para>
                        <Line>អនុគមន៍<Latin>(Function)</Latin> ៖ គឺជាបណ្តុំនៃ <Latin>statement</Latin> ជាច្រើនដែលមានមុខងារធ្វើ</Line>
                        <Line>ការងារ និងឈ្មោះរបស់វាច្បាស់លាស់។ នៅពេលដែល <Latin>program</Latin> មួយជួបនូវ</Line>
                        <Line>បញ្ហាធំ គេត្រូវបំបែកវាជាផ្នែកតូចៗដែលហៅ <Latin>function</Latin>។ កន្លងអ្នកបានឃើញអនុ</Line>
                        <Line>
                          គមន៍មួយចំនួនហើយ ដូចជា <Latin><Misspelt>getch</Misspelt>( ), <Misspelt>getchar</Misspelt>( ), <Misspelt $hit>sqrt
                            <Pointer width="8" height="18" viewBox="0 0 8 18" fill="none" stroke="#222">
                              <path d="M1 1q3 0 3 2v12q0 2-3 2M7 1Q4 1 4 3v12q0 2 3 2M2.500 11h3" />
                            </Pointer>
                          </Misspelt>( )…</Latin> ។
                        </Line>
                      </Para>
                      <Para><Latin>+ Build-in function:</Latin></Para>
                      <Para><Latin>+ User Define Function(UDF):</Latin></Para>
                      <Para>ជាទូទៅ <Latin>function</Latin> ផ្តល់នូវអត្ថប្រយោជន៍ដូចខាងក្រោម៖</Para>
                      <Para>- ងាយស្រួលបង្កើត និងកែប្រែ</Para>
                      <Para>- បំបែកបញ្ហាធំអោយទៅជាបញ្ហាតូចដើម្បីងាយស្រួលគ្រប់គ្រង</Para>
                      <Para>- អាចហៅមកប្រើប្រាស់បានច្រើនដង</Para>
                    </Body>
                    {handles.map(([x, y]) => (
                      <Handle key={`${x}-${y}`} $x={x} $y={y} />
                    ))}
                    <RotateHandle>
                      <svg width="15" height="28" viewBox="0 0 15 28" fill="none" stroke="#999">
                        <path d="M7.500 15v9" />
                        <circle cx="7.500" cy="8" r="6" fill="#fff" />
                        <path d="M9.500 6A3 3 0 1 0 10.500 9M10.500 4v3H7.500" stroke="#777" strokeWidth="1.200" />
                      </svg>
                    </RotateHandle>
                    <AutofitButton aria-label="AutoFit options"><AutofitIcon /></AutofitButton>
                  </TextFrame>
                </Slide>
              </Canvas>
            </Stage>
            <NotesPane>
              <textarea aria-label="Notes" placeholder="Click to add notes" />
            </NotesPane>
          </Editor>
        </Workspace>

        <StatusBar>
          <StatusText>Slide 122 of 162</StatusText>
          <StatusText>English (United States)</StatusText>
          <StatusTools>
            <StatusButton><NotesIcon />Notes</StatusButton>
            <StatusButton><CommentIcon />Comments</StatusButton>
            <ViewButton $on aria-label="Normal"><NormalViewIcon /></ViewButton>
            <ViewButton aria-label="Slide sorter"><SorterIcon /></ViewButton>
            <ViewButton aria-label="Reading view"><BookIcon /></ViewButton>
            <ViewButton aria-label="Slide show"><PresentIcon /></ViewButton>
            <IconButton aria-label="Zoom out">
              <svg width="16" height="10" viewBox="0 0 16 10"><path d="M7 5h9" stroke="#6a686c" strokeWidth="2" /></svg>
            </IconButton>
            <ZoomSlider type="range" aria-label="Zoom" min={0} max={100} defaultValue={57} />
            <IconButton aria-label="Zoom in">
              <svg width="9" height="9" viewBox="0 0 9 9"><path d="M0 4.500h9M4.500 0v9" stroke="#6a686c" strokeWidth="2" /></svg>
            </IconButton>
            <ZoomValue>143%</ZoomValue>
            <IconButton aria-label="Fit to window"><FitIcon /></IconButton>
          </StatusTools>
        </StatusBar>
      </AppWindow>
      <RecordingBadge><RecordDot />Recording</RecordingBadge>
    </Screen>
  );
}
